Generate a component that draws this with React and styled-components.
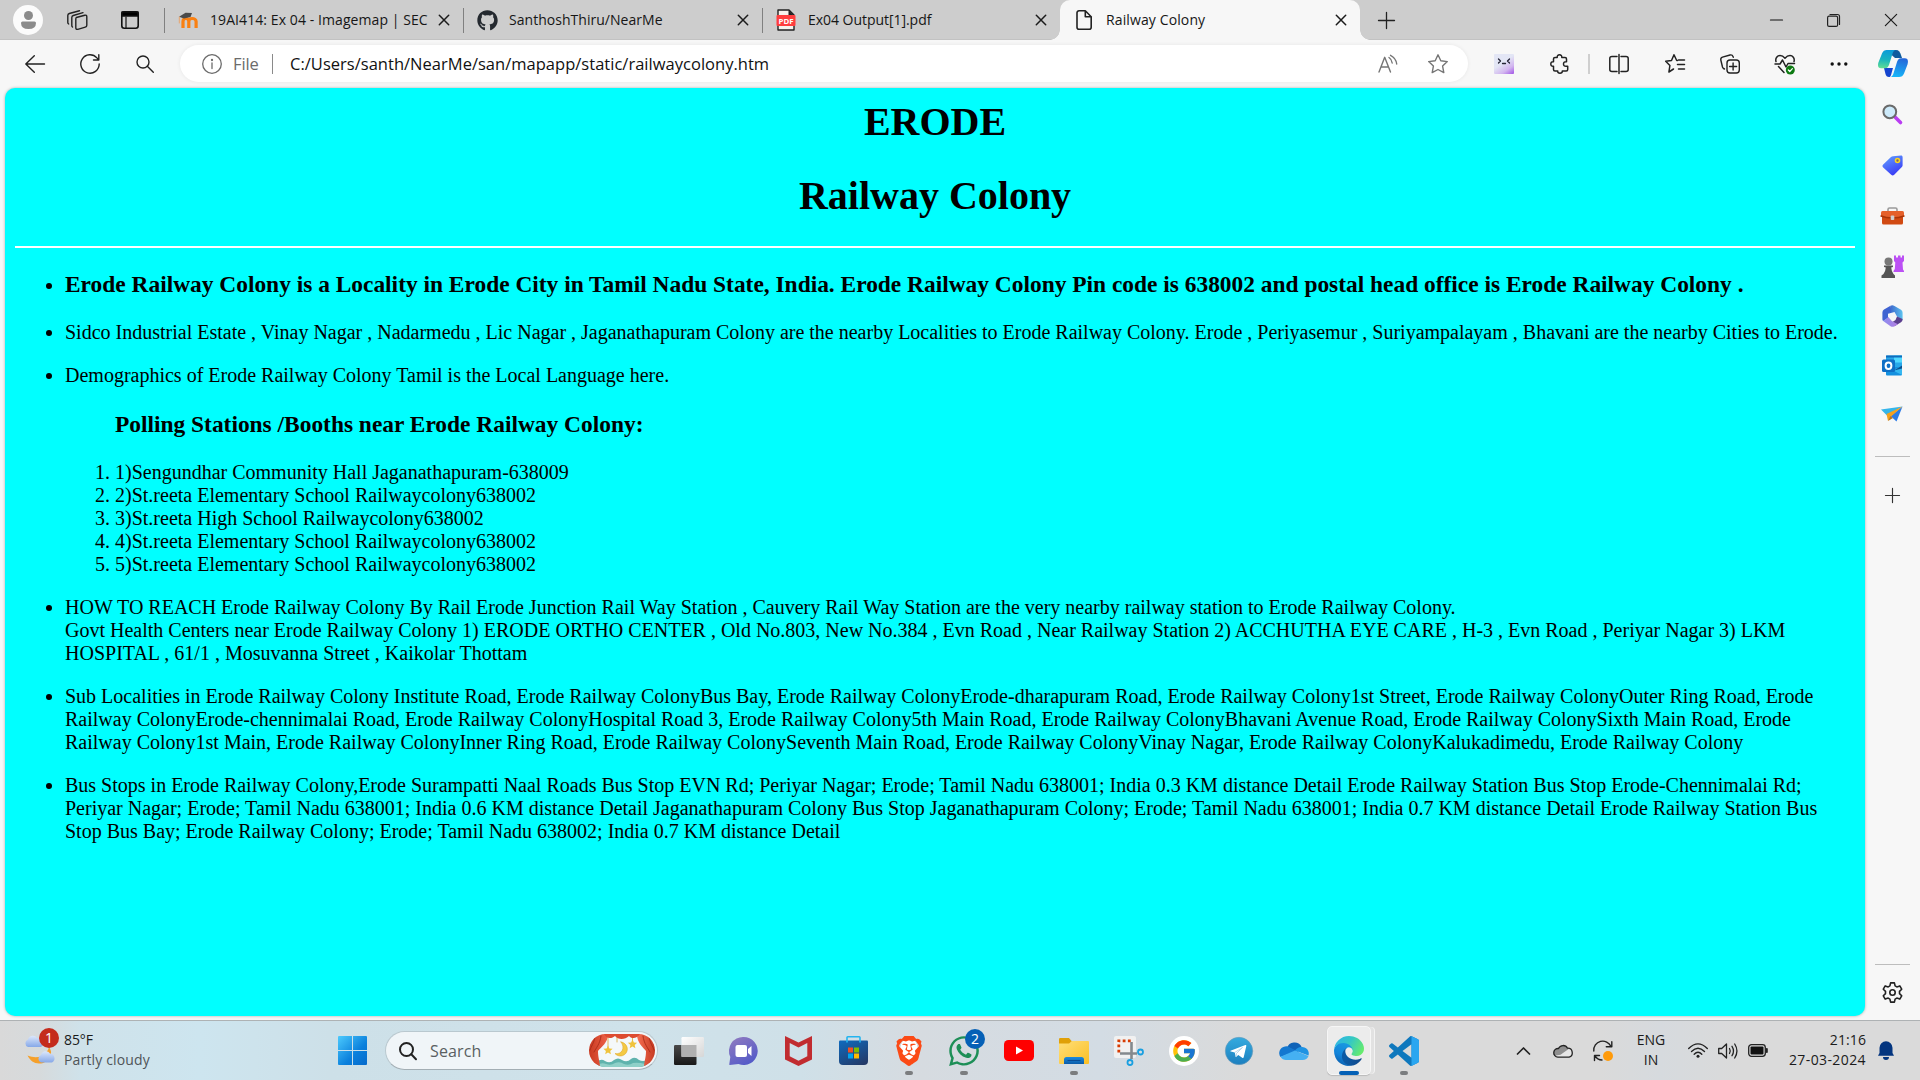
import React from "react";
import styled, { createGlobalStyle, css } from "styled-components";
import { FaGithub, FaWhatsapp } from "react-icons/fa";
import { SiBrave } from "react-icons/si";
import { FcGoogle } from "react-icons/fc";

const Global = createGlobalStyle`
  *, *::before, *::after { box-sizing: border-box; }
  html, body { margin: 0; padding: 0; }
  body { background: #f7f7f7; overflow: hidden; }
`;

const uiFont = css`
  font-family: "Segoe UI", "Open Sans", "Noto Sans", sans-serif;
`;

/* ---------- shared ---------- */

const Screen = styled.div`
  width: 1920px;
  height: 1080px;
  display: flex;
  flex-direction: column;
  background: #f7f7f7;
  color: #111;
  ${uiFont}
`;

const Icon = styled.svg`
  display: block;
  flex: none;
  width: ${(p) => p.$w || 20}px;
  height: ${(p) => p.$h || p.$w || 20}px;
  overflow: visible;
  fill: none;
  stroke: ${(p) => p.$c || "none"};
  stroke-width: ${(p) => p.$s || 1.4};
  stroke-linecap: round;
  stroke-linejoin: round;
`;

const Slot = styled.div`
  flex: none;
  width: ${(p) => p.$w}px;
  height: 100%;
  display: flex;
  align-items: center;
  justify-content: center;
`;

/* ---------- tab strip ---------- */

const TabStrip = styled.div`
  flex: none;
  height: 40px;
  display: flex;
  align-items: center;
  background: #cdcdcd;
  box-shadow: inset 0 -1px 0 #c2c2c2;
`;

const Avatar = styled.div`
  width: 30px;
  height: 30px;
  border-radius: 50%;
  background: #fbfbfb;
  display: flex;
  align-items: center;
  justify-content: center;
`;

const Tab = styled.div`
  position: relative;
  flex: none;
  width: ${(p) => p.$w}px;
  height: 40px;
  padding: 0 9px 0 13px;
  display: flex;
  align-items: center;
  background: ${(p) => (p.$active ? "#f7f7f7" : "transparent")};
  border-radius: ${(p) => (p.$active ? "10px 10px 0 0" : "0")};

  ${(p) =>
    p.$active
      ? css`
          &::before,
          &::after {
            content: "";
            position: absolute;
            bottom: 0;
            width: 10px;
            height: 10px;
          }
          &::before {
            left: -10px;
            background: radial-gradient(circle at 0 0, transparent 9.5px, #f7f7f7 10px);
          }
          &::after {
            right: -10px;
            background: radial-gradient(circle at 100% 0, transparent 9.5px, #f7f7f7 10px);
          }
        `
      : css`
          &::before {
            content: "";
            position: absolute;
            left: 0;
            top: 8px;
            width: 1px;
            height: 25px;
            background: #808080;
          }
        `}
`;

const TabIcon = styled.div`
  flex: none;
  width: 22px;
  display: flex;
  justify-content: center;
`;

const TabLabel = styled.div`
  flex: 1;
  padding-left: 11px;
  font-size: 14px;
  line-height: 20px;
  letter-spacing: ${(p) => p.$ls || 0}px;
  white-space: nowrap;
  color: #161616;
`;

const TabClose = styled.div`
  flex: none;
  width: 20px;
  display: flex;
  justify-content: center;
`;

const Spacer = styled.div`
  flex: 1;
`;

/* ---------- toolbar ---------- */

const Toolbar = styled.div`
  flex: none;
  height: 48px;
  padding: 0 0 1px 8px;
  display: flex;
  align-items: center;
`;

const AddressBar = styled.div`
  flex: none;
  width: 1288px;
  height: 37px;
  margin: 0 8px;
  border-radius: 19px;
  background: #fff;
  box-shadow: 0 0 4px rgba(0, 0, 0, 0.07);
  display: flex;
  align-items: center;
  padding-left: 22px;
`;

const Scheme = styled.span`
  padding-left: 11px;
  width: 50px;
  font-size: 16.5px;
  letter-spacing: -0.1px;
  color: #6b6b6b;
`;

const Rule = styled.span`
  flex: none;
  width: ${(p) => p.$w || 1}px;
  height: ${(p) => p.$h}px;
  background: ${(p) => p.$c};
`;

const Url = styled.span`
  flex: 1;
  padding-left: 17px;
  font-size: 16.5px;
  letter-spacing: 0.02px;
  white-space: nowrap;
  color: #111;
`;

/* ---------- page ---------- */

const Workspace = styled.div`
  flex: none;
  height: 932px;
  display: flex;
  padding-left: 5px;
`;

const Page = styled.main`
  flex: none;
  width: 1860px;
  height: 928px;
  padding: 10px;
  border-radius: 10px;
  background: #00ffff;
  box-shadow: 0 0 3px rgba(0, 0, 0, 0.3);
  color: #000;
  font-family: "Times New Roman", "Liberation Serif", serif;
  font-size: 20px;
  line-height: 23px;

  h1 {
    margin: 0 0 27px;
    font-size: 40px;
    line-height: 47px;
    text-align: center;
  }
  hr {
    margin: 0;
    border: 0;
    height: 2px;
    background: #fff;
  }
  h3 {
    margin: 23.4px 0;
    font-size: 23.41px;
    line-height: 26.6px;
  }
  p {
    margin: 20px 0;
  }
  ul,
  ol {
    margin: 0;
    padding-left: 50px;
  }
`;

/* ---------- sidebar ---------- */

const Sidebar = styled.aside`
  flex: 1;
  padding: 1px 1px 0 0;
  display: flex;
  flex-direction: column;
  align-items: center;
`;

const SideItem = styled.div`
  height: ${(p) => p.$h}px;
  flex: none;
  display: flex;
  align-items: center;
  justify-content: center;
`;

/* ---------- taskbar ---------- */

const Taskbar = styled.footer`
  flex: none;
  height: 60px;
  border-top: 1px solid #aeb2b4;
  display: flex;
  align-items: center;
  background: linear-gradient(
    90deg,
    #d9d9d9 0,
    #d6dadc 40px,
    #cfe2ea 80px,
    #cde5ef 200px,
    #cde0e8 330px,
    #cfe2ea 640px,
    #cfe0e8 800px,
    #d6dbe0 920px,
    #d3dce4 1100px,
    #dadada 1250px,
    #dadada 1600px,
    #d6dade 1660px,
    #dadada 1740px
  );
`;

const Weather = styled.div`
  flex: none;
  width: 338px;
  display: flex;
  align-items: center;
  padding-left: 24px;
`;

const WeatherText = styled.div`
  padding: 0 0 2px 9px;
  display: flex;
  flex-direction: column;
  font-size: 14px;
  line-height: 20px;
  white-space: nowrap;
  letter-spacing: -0.1px;
  color: #1a1a1a;

  span + span {
    color: #505558;
    letter-spacing: 0.16px;
  }
`;

const SearchBox = styled.div`
  flex: none;
  width: 273px;
  height: 39px;
  margin: 0 3px 0 18px;
  padding: 0 2px 0 13px;
  border-radius: 20px;
  border: 1px solid #b9c8cf;
  border-bottom-color: #a3aeb4;
  background: #f0f5f8;
  display: flex;
  align-items: center;
`;

const SearchText = styled.span`
  flex: 1;
  padding-left: 13px;
  font-size: 16px;
  letter-spacing: 0.15px;
  color: #5a5f62;
`;

const AppButton = styled.div`
  position: relative;
  flex: none;
  width: 55px;
  height: 59px;
  display: flex;
  align-items: center;
  justify-content: center;

  &::after {
    content: "";
    display: ${(p) => (p.$running || p.$current ? "block" : "none")};
    position: absolute;
    left: 50%;
    bottom: 5px;
    width: ${(p) => (p.$current ? 20 : 8)}px;
    height: 4px;
    transform: translateX(-50%);
    border-radius: 2px;
    background: ${(p) => (p.$current ? "#0560b6" : "#7b7d7f")};
  }
`;

const CurrentTile = styled.div`
  width: 44px;
  height: 49px;
  border-radius: 5px;
  border: 1px solid #f6f6f6;
  background: #ececec;
  box-shadow: 4px 0 0 -1px #e2e2e2, 5px 0 0 -1px #f3f3f3, 0 1px 1px rgba(0, 0, 0, 0.15);
  display: flex;
  align-items: center;
  justify-content: center;
`;

const Count = styled.span`
  position: absolute;
  left: ${(p) => p.$x}px;
  top: ${(p) => p.$y}px;
  width: 20px;
  height: 20px;
  border-radius: 50%;
  background: ${(p) => p.$bg};
  color: #fff;
  font-size: 14px;
  line-height: 20px;
  text-align: center;
`;

const WeatherIcon = styled.div`
  position: relative;
`;

const BraveIcon = styled.div`
  display: flex;
  background: radial-gradient(ellipse 9px 12px at 50% 46%, #fff 95%, transparent 100%);
  color: #fb4a16;
`;

const GoogleDisc = styled.div`
  width: 30px;
  height: 30px;
  border-radius: 50%;
  background: #fff;
  display: flex;
  align-items: center;
  justify-content: center;
`;

const Stack = styled.div`
  flex: none;
  width: ${(p) => p.$w}px;
  padding-bottom: 1px;
  display: flex;
  flex-direction: column;
  text-align: ${(p) => p.$align};
  font-size: 14px;
  line-height: 20px;
  white-space: nowrap;
  color: #1b1b1b;
`;

const StackLine = styled.span`
  letter-spacing: ${(p) => p.$ls || 0}px;
`;

/* ---------- icons ---------- */

const Cross = ({ w = 10, s = 1.5 }) => (
  <Icon $w={w} $c="#1b1b1b" $s={s} viewBox="0 0 10 10"><path d="M.3.3l9.4 9.4M9.7.3L.3 9.7" /></Icon>
);

const Plus = ({ w = 17, c = "#222" }) => (
  <Icon $w={w} $c={c} $s={1.3} viewBox="0 0 17 17"><path d="M8.5.5v16M.5 8.5h16" /></Icon>
);

const Moodle = () => (
  <Icon $w={20} $h={16} viewBox="0 0 20 16">
    <path d="M5 16V9.500c0-2 1.200-3 2.900-3s2.900 1 2.900 3V16M10.800 9.500c0-2 1.500-3 3.400-3s3.900 1 3.900 3V16" stroke="#f98012" strokeWidth="3.200" strokeLinecap="butt" />
    <path d="M1 4.800L7.500.8 14 1.100 12.500 5 6 6.500z" fill="#4a4a4a" />
    <path d="M1.300 5v6" stroke="#e9a46c" strokeWidth="1" />
  </Icon>
);

const Pdf = () => (
  <Icon $w={20} $h={22} viewBox="0 0 20 22">
    <path d="M2 1h11l5 5v15H2z" fill="#f7f3ee" stroke="#222" strokeWidth="1.400" />
    <path d="M12.500 1l5.500 5.500h-5.500z" fill="#222" />
    <rect x="0.500" y="6" width="19" height="11" rx="1" fill="#ff3e3e" />
    <text x="10" y="14.600" textAnchor="middle" fontSize="7.800" fontWeight="700" fontFamily="Open Sans, sans-serif" fill="#fff">PDF</text>
  </Icon>
);

const Copilot = () => (
  <Icon $w={30} $h={27} viewBox="0 0 30 27">
    <defs>
      <linearGradient id="cpA" x1="0.300" y1="0" x2="0.200" y2="1">
        <stop offset="0" stopColor="#0a9bd8" /><stop offset="0.500" stopColor="#17b3c0" /><stop offset="1" stopColor="#62de92" />
      </linearGradient>
      <linearGradient id="cpB" x1="0.700" y1="0" x2="0.500" y2="1">
        <stop offset="0" stopColor="#2465d8" /><stop offset="1" stopColor="#17b4f8" />
      </linearGradient>
    </defs>
    <path d="M8 0h10c3 0 4 2 5 5l1 3h-7z" fill="#0f5b9e" />
    <path d="M6 18h9l-2 7c-.5 1.500-1 2-2 2-2 0-3-1-3.500-3z" fill="#1444cf" />
    <path d="M9 0h9c-2 0-3 2-3.600 4l-3.400 11c-.8 2-2 3.300-4 3.300H3c-3 0-3.500-3-2.500-6L4 3.500C5 1 6.500 0 9 0z" fill="url(#cpA)" />
    <path d="M21 27h-9c2 0 3-2 3.600-4L19 12c.8-2 2-3.700 4-3.700h4c3 0 3.500 3 2.500 6.200L26 23.500c-1 2.500-2.500 3.500-5 3.500z" fill="url(#cpB)" />
  </Icon>
);

const Edge = () => (
  <Icon $w={30} viewBox="0 0 256 256">
    <defs>
      <linearGradient id="egA" x1="0.200" x2="1" y1="0.600" y2="0.600"><stop offset="0" stopColor="#0c59a4" /><stop offset="1" stopColor="#114a8b" /></linearGradient>
      <linearGradient id="egB" x1="0.700" x2="0.300" y1="0" y2="1"><stop offset="0" stopColor="#1b9de2" /><stop offset="0.600" stopColor="#1383d9" /><stop offset="1" stopColor="#0a5cab" /></linearGradient>
      <linearGradient id="egC" x1="0" x2="1" y1="0.200" y2="0.600"><stop offset="0" stopColor="#2fb4e8" /><stop offset="0.500" stopColor="#35c8c4" /><stop offset="1" stopColor="#66eb6e" /></linearGradient>
    </defs>
    <path fill="url(#egA)" d="M231 190.500c-3.400 1.800-6.900 3.400-10.500 4.700a101.500 101.500 0 0 1-35.900 6.400c-47.300 0-88.500-32.500-88.500-74.300a31.500 31.500 0 0 1 16.400-27.300c-42.800 1.800-53.800 46.400-53.800 72.500 0 74 68.100 81.400 82.800 81.400 7.900 0 19.800-2.300 27-4.600l1.300-.4a128.300 128.300 0 0 0 66.600-52.800 4 4 0 0 0-5.400-5.600z" />
    <path fill="url(#egB)" d="M105.700 241.400a79.200 79.200 0 0 1-22.700-21.300 80.700 80.700 0 0 1 29.500-120c3.200-1.500 8.500-4.100 15.600-4a32.400 32.400 0 0 1 25.700 13 31.900 31.900 0 0 1 6.300 18.700c0-.2 24.500-79.600-80-79.600-43.900 0-80 41.600-80 78.200a130.200 130.200 0 0 0 12.100 56 128 128 0 0 0 156.400 67 75.500 75.500 0 0 1-62.800-8z" />
    <path fill="url(#egC)" d="M152.300 148.900c-.9 1-3.400 2.500-3.400 5.600 0 2.600 1.700 5.200 4.800 7.300 14.300 10 41.400 8.600 41.500 8.600a59.600 59.600 0 0 0 30.300-8.300 61.400 61.400 0 0 0 30.400-52.900c.3-22.400-8-37.300-11.300-43.900C223.500 23.900 177.700 0 128 0A128 128 0 0 0 0 126.200c.5-36.500 36.800-66 80-66 3.500 0 23.500.3 42 10.100 16.300 8.600 24.900 19 30.800 29.200 6.200 10.700 7.300 24.100 7.300 29.500 0 5.300-2.700 13.300-7.800 19.900z" />
  </Icon>
);

const Curtain = () => (
  <Icon $w={66} $h={33} viewBox="0 0 66 33">
    <defs>
      <clipPath id="pill"><rect width="66" height="33" rx="16.500" /></clipPath>
      <linearGradient id="drape" x1="0" x2="1"><stop offset="0" stopColor="#c93a22" /><stop offset="0.300" stopColor="#f0654a" /><stop offset="0.500" stopColor="#cf3f26" /><stop offset="0.750" stopColor="#f26a4e" /><stop offset="1" stopColor="#c63a22" /></linearGradient>
    </defs>
    <g clipPath="url(#pill)">
      <rect width="66" height="33" fill="#f4f8fa" />
      <path d="M8 28q4-4 8-1 5 3 9-1 4-3 8 0 5 3 9-1 4-3 8 1 4 2 8 0v8H8z" fill="#5fb3ad" />
      <path d="M8 31q5-3 9-1 5 2 9-1 5-2 9 1 5 2 9-1 5-1 12 1v4H8z" fill="#8fd0c8" />
      <path d="M19 0v13M28 0v8M43.500 0v7" stroke="#d8a637" strokeWidth="0.800" />
      <path d="M19 11.500l1.400 3 3.200.3-2.400 2.200.7 3.200-2.900-1.700-2.800 1.700.7-3.200-2.500-2.200 3.200-.3zM43.500 5.500l1.400 3 3.200.3-2.400 2.200.7 3.200-2.900-1.700-2.800 1.700.7-3.200-2.500-2.200 3.200-.3z" fill="#f0c33c" />
      <path d="M32 8a7 7 0 1 1-6 11.500c7 1.500 10.500-6 6-11.500z" fill="#f4c943" stroke="#e0a92c" strokeWidth="0.600" />
      <path d="M0 0h19c0 9-7 13-10 17 0 7 2 11 2 16H0zM66 0H48c0 9 6 13 9 17 0 7-2 11-2 16h11z" fill="url(#drape)" />
      <path d="M15 0h36c-3 5-9 5-11 2-4 4-11 4-14 0-3 3-9 3-11-2z" fill="#dd4b30" />
      <path d="M6 2c-1 8-4 10-5 14M12 2c-1 8-5 12-7 16M60 2c1 8 4 10 5 14M54 2c1 8 5 12 7 16" stroke="#a92c18" strokeWidth="0.900" />
    </g>
  </Icon>
);

/* ---------- data ---------- */

const tabs = [
  { title: "19AI414: Ex 04 - Imagemap | SEC", icon: <Moodle />, w: 299, ls: 0.08 },
  { title: "SanthoshThiru/NearMe", icon: <FaGithub size={21} color="#24292f" />, w: 299, ls: 0.03 },
  { title: "Ex04 Output[1].pdf", icon: <Pdf />, w: 298, ls: -0.04 },
  {
    title: "Railway Colony",
    icon: (
      <Icon $w={16} $h={20} $c="#222" $s={1.6} viewBox="0 0 16 20">
        <path d="M3 .8h6.300L15.200 6.800v10.400a2 2 0 0 1-2 2H3a2 2 0 0 1-2-2V2.800a2 2 0 0 1 2-2zM9.300.8v6h6" />
      </Icon>
    ),
    w: 300,
    ls: 0.12,
    active: true,
  },
];

const booths = [
  "1)Sengundhar Community Hall Jaganathapuram-638009",
  "2)St.reeta Elementary School Railwaycolony638002",
  "3)St.reeta High School Railwaycolony638002",
  "4)St.reeta Elementary School Railwaycolony638002",
  "5)St.reeta Elementary School Railwaycolony638002",
];

const sideIcons = [
  <Icon $w={20} viewBox="0 0 20 20">
    <path d="M13 13l5.500 5.500" stroke="#b93df2" strokeWidth="3.600" />
    <circle cx="7.800" cy="7.800" r="6.400" fill="#cdeafa" stroke="#6a6a6a" strokeWidth="2" />
  </Icon>,
  <Icon $w={21} viewBox="0 0 21 21">
    <defs><linearGradient id="tag" x1="0" x2="0.500" y2="1"><stop offset="0" stopColor="#63a4ff" /><stop offset="1" stopColor="#3a3df5" /></linearGradient></defs>
    <path d="M11 1.200L19 .6c1 0 1.600.600 1.600 1.600V10c0 1-.3 1.600-1 2.300l-7.400 7.400c-1 1-2 1-3 0L1.200 12.500c-1-1-1-2 0-3L9 2c.6-.6 1.200-.8 2-.8z" fill="url(#tag)" />
    <circle cx="15.500" cy="5.500" r="2" fill="#7a6a6a" stroke="#fbd320" strokeWidth="1.600" />
  </Icon>,
  <Icon $w={23} $h={18} viewBox="0 0 23 18">
    <path d="M7 5V2.500Q7 1 8.500 1h6Q16 1 16 2.500V5" stroke="#9a9a9a" strokeWidth="1.600" />
    <rect x="1" y="8" width="21" height="9.500" rx="1.500" fill="#d14a12" />
    <path d="M0 5.500Q0 4 1.500 4h20Q23 4 23 5.500V9q-5 2-11.500 2T0 9z" fill="#e5602a" />
    <path d="M0 9q5 2 11.500 2T23 9" stroke="#a93508" />
    <rect x="9.700" y="8.500" width="3.600" height="4.500" rx="1" fill="#cfcfcf" />
  </Icon>,
  <Icon $w={23} viewBox="0 0 23 23">
    <path d="M13 .5h2v2h2v-2h2.500v2h1.500v-2h2V6l-1.500 1.500.5 7 1 1.500V17H12.500v-1l1.300-2 .5-6.500L13 6z" fill="#bb50f4" />
    <circle cx="7.500" cy="6.500" r="4" fill="#777" />
    <path d="M3 10.500h9v1.500l-1.800.5q.3 4 2.300 6.500l1.500 1.500V23H.5v-2.500L2.500 19Q4.500 16.500 4.800 12.500L3 12z" fill="#555" />
  </Icon>,
  <Icon $w={21} $h={22} viewBox="0 0 21 22">
    <defs>
      <linearGradient id="m1" x1="0" x2="1"><stop offset="0" stopColor="#3a5fc8" /><stop offset="1" stopColor="#5cc3f0" /></linearGradient>
      <linearGradient id="m2" x1="0" x2="1"><stop offset="0" stopColor="#8e8df0" /><stop offset="1" stopColor="#b07de0" /></linearGradient>
    </defs>
    <path d="M8.500.8q2-1 4 .2l6.500 3.800q1.600 1 1.600 3V15L15 11.500 12.500 7 7 8.500z" fill="url(#m1)" />
    <path d="M8.500.8L2 4.500Q.4 5.500.4 7.500v6.800q0 1 .8 1.700L6 13V9l2.500-2z" fill="#3f63d2" />
    <path d="M20.600 14v.5q0 1.700-1.600 2.700l-6.500 4L9 18l4.500-3L15 11.500z" fill="#5b3f8f" />
    <path d="M6.300 12L1.200 16l7.300 5.200q2 1.200 4 0l3.500-2-6.200-3.300z" fill="url(#m2)" />
  </Icon>,
  <Icon $w={21} viewBox="0 0 21 21">
    <rect x="4" y="0.500" width="16" height="14" rx="1" fill="#28a8ea" />
    <rect x="12" y="0.500" width="8" height="7" fill="#50d9ff" />
    <rect x="4" y="0.500" width="16" height="2" fill="#0f6cbd" />
    <path d="M4 12l16 0v7.500q0 1-1 1H5q-1 0-1-1z" fill="#1490df" />
    <path d="M20 10.500v9.500l-9-4.500z" fill="#35b8f1" />
    <path d="M12 15.500l8-5v3z" fill="#0a4f8f" />
    <rect x="0" y="4.500" width="13" height="12.500" rx="1.500" fill="#0f6fc6" />
    <ellipse cx="6.500" cy="10.800" rx="2.900" ry="3.200" stroke="#fff" strokeWidth="2" />
  </Icon>,
  <Icon $w={22} $h={17} viewBox="0 0 22 17">
    <path d="M0 3.500L21.500.5 6 9.500z" fill="#35b5ea" />
    <path d="M21.500.5L15.500 15.500 9.500 10z" fill="#2a7be6" />
    <path d="M21.500.5L5.500 8 7 15l3-4.500z" fill="#f5a11c" />
    <path d="M7 15l2.500-5 2.500 2z" fill="#b9731a" />
  </Icon>,
];

const taskApps = [
  {
    icon: (
      <Icon $w={30} $h={28} viewBox="0 0 30 28">
        <defs><linearGradient id="tvd" x1="0" x2="0" y2="1"><stop offset="0" stopColor="#494949" /><stop offset="1" stopColor="#191919" /></linearGradient>
          <linearGradient id="tvl" x2="1" y2="1"><stop offset="0" stopColor="#fff" /><stop offset="1" stopColor="#d6d6d6" /></linearGradient></defs>
        <rect x="0" y="8" width="22.500" height="20" rx="1.200" fill="url(#tvd)" />
        <rect x="7.500" y="0" width="22.500" height="20" rx="1.200" fill="url(#tvl)" />
        <rect x="7.500" y="8" width="15" height="12" fill="#b0b0b0" />
      </Icon>
    ),
  },
  {
    icon: (
      <Icon $w={29} $h={28} viewBox="0 0 29 28">
        <defs><linearGradient id="ch" x1="0.200" y1="0" x2="0.800" y2="1"><stop offset="0" stopColor="#8d79c0" /><stop offset="1" stopColor="#5059c9" /></linearGradient></defs>
        <path d="M14.500 0a14 14 0 1 1-5 27L.8 28q-.8 0-.5-.9L1.300 20A14 14 0 0 1 14.500 0z" fill="url(#ch)" />
        <rect x="6.500" y="8" width="11.500" height="12" rx="2" fill="#fff" />
        <path d="M19 12l3.500-3v10L19 16z" fill="#fff" />
      </Icon>
    ),
  },
  {
    icon: (
      <Icon $w={27} $h={30} viewBox="0 0 27 30">
        <path d="M0 0l13.500 6.500L27 0v23.500L13.500 30 0 23.500zM4.700 7v13.200l8.800 4.500 8.800-4.500V7l-8.800 4.600z" fill="#c12c30" fillRule="evenodd" />
      </Icon>
    ),
  },
  {
    icon: (
      <Icon $w={29} $h={29} viewBox="0 0 29 29">
        <defs><linearGradient id="st" x1="0.200" x2="0.800" y2="1"><stop offset="0" stopColor="#1067b8" /><stop offset="1" stopColor="#243a68" /></linearGradient></defs>
        <path d="M0 5.500q0-1 1-1h27q1 0 1 1V25q0 4-4 4H4q-4 0-4-4z" fill="url(#st)" />
        <path d="M8 6V1.500Q8 .8 8.800.8h11.400q.8 0 .8.700V6" stroke="#23b4ef" strokeWidth="1.600" />
        <path d="M9 11.500h5v5H9z" fill="#f25022" /><path d="M15 11.500h5v5h-5z" fill="#7fba00" />
        <path d="M9 17.500h5v5H9z" fill="#00a4ef" /><path d="M15 17.500h5v5h-5z" fill="#ffb900" />
      </Icon>
    ),
  },
  { icon: <BraveIcon><SiBrave size={30} /></BraveIcon>, running: true },
  { icon: <><FaWhatsapp size={34} color="#1d8f57" /><Count $x={29} $y={8} $bg="#0560b6">2</Count></>, running: true },
  {
    icon: (
      <Icon $w={30} $h={21} viewBox="0 0 30 21">
        <rect width="30" height="21" rx="4.500" fill="#f00" /><path d="M12 6.500l7 4-7 4z" fill="#fff" />
      </Icon>
    ),
  },
  {
    icon: (
      <Icon $w={30} $h={26} viewBox="0 0 30 26">
        <defs><linearGradient id="fo" x2="1" y2="1"><stop offset="0" stopColor="#ffdf7a" /><stop offset="1" stopColor="#fbbf24" /></linearGradient>
          <linearGradient id="fb" x1="0" x2="0" y2="1"><stop offset="0" stopColor="#1b8be0" /><stop offset="1" stopColor="#0b5ba8" /></linearGradient></defs>
        <path d="M0 1.200Q0 0 1.200 0H10l3 3.500V6H0z" fill="#e0a008" />
        <path d="M0 5.500h10L13 3h16q1 0 1 1v21q0 1-1 1H1q-1 0-1-1z" fill="url(#fo)" />
        <path d="M5 26v-4.500Q5 19 7.500 19h15q2.500 0 2.500 2.500V26z" fill="url(#fb)" />
        <path d="M9 22.500h12" stroke="#0a4c94" strokeWidth="1.200" />
      </Icon>
    ),
    running: true,
  },
  {
    icon: (
      <Icon $w={30} viewBox="0 0 30 30">
        <rect width="22" height="22" rx="2" fill="#f1f1f1" />
        <path d="M4.800 16.500V4.800H17" stroke="#d83b01" strokeWidth="2.800" strokeDasharray="2.800 2.400" strokeLinecap="butt" strokeLinejoin="miter" />
        <path d="M6 17.500h17M17.500 6v17" stroke="#84898d" strokeWidth="2.600" strokeLinecap="butt" />
        <circle cx="26.500" cy="16" r="2.500" stroke="#1a9fe0" strokeWidth="1.800" />
        <circle cx="16" cy="26.500" r="2.500" stroke="#1a9fe0" strokeWidth="1.800" />
      </Icon>
    ),
  },
  { icon: <GoogleDisc><FcGoogle size={26} /></GoogleDisc> },
  {
    icon: (
      <Icon $w={28} viewBox="0 0 28 28">
        <defs><linearGradient id="tg" x1="0" x2="0" y2="1"><stop offset="0" stopColor="#35abdf" /><stop offset="1" stopColor="#1c7fbf" /></linearGradient></defs>
        <circle cx="14" cy="14" r="13.700" fill="url(#tg)" stroke="#6c9bb8" strokeWidth="0.600" />
        <path d="M5.500 13.700L20.300 8q1.200-.3 1 1L18.700 20.300q-.4 1.200-1.500.5l-3.900-2.900-2 1.900q-.6.500-.7-.4l-.8-4L5.900 14.500q-1-.4-.4-.8z" fill="#fff" />
        <path d="M10 15.300l7.500-4.800-6 6-.4 3" stroke="#a8cfe6" strokeWidth="0.800" />
      </Icon>
    ),
  },
  {
    icon: (
      <Icon $w={30} $h={19} viewBox="0 0 30 19">
        <path d="M8 7a8 8 0 0 1 14.500-1.500L19 11 8 8z" fill="#0f63b8" />
        <path d="M9 5.500a6.800 6.800 0 0 0-3 0A6.600 6.600 0 0 0 1.500 16L18 10z" fill="#1478d0" />
        <path d="M22.300 6a6.600 6.600 0 0 1 7.200 8.500L16 9.500q2.500-3.600 6.300-3.500z" fill="#1f93e3" />
        <path d="M1.500 15.700L16 9.500l13.500 5.500q-1.500 4-6 4H7q-3.500 0-5.500-3.300z" fill="#45b0f2" />
      </Icon>
    ),
  },
  { icon: <CurrentTile><Edge /></CurrentTile>, current: true },
  {
    icon: (
      <Icon $w={30} viewBox="0 0 24 24">
        <path fill="#0f78bd" d="M23.150 2.587L18.210.21a1.494 1.494 0 0 0-1.705.29l-9.460 8.630-4.120-3.128a.999.999 0 0 0-1.276.057L.327 7.261A1 1 0 0 0 .326 8.740L3.899 12 .326 15.260a1 1 0 0 0 .001 1.479L1.650 17.940a.999.999 0 0 0 1.276.057l4.120-3.128 9.460 8.630a1.492 1.492 0 0 0 1.704.29l4.942-2.377A1.500 1.500 0 0 0 24 20.060V3.939a1.500 1.500 0 0 0-.85-1.352zm-5.146 14.861L10.826 12l7.178-5.448v10.896z" />
        <path fill="#2aa6f0" d="M18 .1l5.150 2.487A1.500 1.500 0 0 1 24 3.940v16.120a1.500 1.500 0 0 1-.85 1.352L18 23.900z" />
      </Icon>
    ),
    running: true,
  },
];

/* ---------- app ---------- */

export default function App() {
  return (
    <Screen>
      <Global />
      <TabStrip>
        <Slot $w={56}>
          <Avatar>
            <Icon $w={15} $h={18} viewBox="0 0 15 18">
              <circle cx="7.500" cy="4.500" r="4.500" fill="#8b8b8b" />
              <path d="M1.500 10.500h12q1.500 0 1.500 1.500 0 6-7.500 6T0 12q0-1.500 1.500-1.500z" fill="#8b8b8b" />
            </Icon>
          </Avatar>
        </Slot>
        <Slot $w={43}>
          <Icon $w={21} $h={20} $c="#222" viewBox="0 0 21 20">
            <path d="M9.300 7.500l8.500-2.300q2-.5 2 1.500v8.500q0 1.500-1.500 1.900l-7.500 2.200q-2 .5-2-1.500V9q0-1.200.5-1.500zM5.500 17Q4.800 16.500 4.800 15.500V7.500Q4.800 6 6.300 5.500L16 2.700M1.700 14Q.8 13.500.8 12.500V5.500Q.8 4 2.300 3.500L12.500.8" />
          </Icon>
        </Slot>
        <Slot $w={62}>
          <Icon $w={18} $c="#111" $s={1.600} viewBox="0 0 18 18">
            <rect x="0.800" y="0.800" width="16.400" height="16.400" rx="2.500" />
            <path d="M1 1h16v4H1z" fill="#000" /><path d="M5 6v11" strokeWidth="1.200" />
          </Icon>
        </Slot>
        <Slot $w={3} />
        {tabs.map((t) => (
          <Tab key={t.title} $w={t.w} $active={t.active}>
            <TabIcon>{t.icon}</TabIcon>
            <TabLabel $ls={t.ls}>{t.title}</TabLabel>
            <TabClose><Cross /></TabClose>
          </Tab>
        ))}
        <Slot $w={53}><Plus /></Slot>
        <Spacer />
        <Slot $w={57}><Icon $w={13} $h={2} $c="#111" $s={1.200} viewBox="0 0 13 2"><path d="M.5 1h12" /></Icon></Slot>
        <Slot $w={57}>
          <Icon $w={13} $h={13} $c="#222" $s={1.200} viewBox="0 0 13 13">
            <rect x="0.600" y="2.200" width="10" height="10.200" rx="1.500" /><path d="M3 .5h7.500q2 0 2 2v8" />
          </Icon>
        </Slot>
        <Slot $w={58}><Cross w={12} s={1} /></Slot>
      </TabStrip>

      <Toolbar>
        <Slot $w={54}><Icon $w={20} $h={18} $c="#222" viewBox="0 0 20 18"><path d="M19.500 9H.8M9.300.7L.8 9l8.500 8.300" /></Icon></Slot>
        <Slot $w={55}><Icon $w={20} $c="#222" viewBox="0 0 20 20"><path d="M19.200 10a9.200 9.200 0 1 1-2.300-6.100L18.800 6M18.800.8V6h-5.300" /></Icon></Slot>
        <Slot $w={55}><Icon $w={18} $c="#222" viewBox="0 0 18 18"><circle cx="7" cy="7" r="6" /><path d="M11.300 11.300l6 6" /></Icon></Slot>
        <AddressBar>
          <Icon $w={20} $c="#6b6b6b" $s={1.300} viewBox="0 0 20 20">
            <circle cx="10" cy="10" r="9.300" /><path d="M10 9v5.500" /><circle cx="10" cy="6" r="0.500" fill="#6b6b6b" />
          </Icon>
          <Scheme>File</Scheme>
          <Rule $h={20} $c="#8a8a8a" />
          <Url>C:/Users/santh/NearMe/san/mapapp/static/railwaycolony.htm</Url>
          <Slot $w={50}>
            <Icon $w={20} $h={18} $c="#757575" viewBox="0 0 20 18">
              <path d="M1 17L6.700 2.300 12.500 17M3 12h7.500M11 2.500q2.800 1.800 3.200 5.500M12.500.3Q18 3 18.700 9" />
            </Icon>
          </Slot>
          <Slot $w={50}>
            <Icon $w={20} $c="#757575" viewBox="0 0 20 20">
              <path d="M10 .8l2.800 5.900 6.500.9-4.700 4.500 1.200 6.500L10 15.500l-5.800 3.100 1.200-6.500L.7 7.600l6.500-.9z" />
            </Icon>
          </Slot>
          <Slot $w={5} />
        </AddressBar>
        <Slot $w={56}>
          <Icon $w={20} viewBox="0 0 20 20">
            <defs><linearGradient id="xt" x1="0.300" x2="1" y2="1"><stop offset="0.350" stopColor="#e3e6f5" /><stop offset="0.700" stopColor="#d2b5ef" /><stop offset="1" stopColor="#a052e6" /></linearGradient></defs>
            <rect width="20" height="20" rx="1" fill="url(#xt)" />
            <path d="M4.500 5l2 2-2 2M15.500 5l-2 2 2 2M8.500 9.500h3" stroke="#252536" strokeWidth="1.300" />
          </Icon>
        </Slot>
        <Slot $w={55}>
          <Icon $w={19} $h={20} $c="#222" $s={1.500} viewBox="0 0 19 20">
            <path d="M5 3.500h2.200C7 1.500 8 .8 9.500.8s2.500.7 2.300 2.700H15q1.500 0 1.500 1.500v2.700c-2.300-.2-3 .8-3 2.300s.7 2.500 3 2.300h1.200V15.500q0 1.500-1.500 1.500h-3.900c.2 1.500-.8 2.200-2.300 2.200s-2.500-.7-2.300-2.200H5q-1.500 0-1.500-1.500v-3.200C1.500 12.500.8 11.500.8 10s.7-2.500 2.700-2.300V5q0-1.500 1.500-1.500z" />
          </Icon>
        </Slot>
        <Slot $w={1} />
        <Rule $w={2} $h={20} $c="#cfcfcf" />
        <Slot $w={57}>
          <Icon $w={20} $c="#222" $s={1.500} viewBox="0 0 20 20">
            <path d="M8 2.500H3q-2.200 0-2.200 2v11q0 2 2.200 2h5M12 2.500h5q2.200 0 2.200 2v11q0 2-2.200 2h-5M10 .5v19" />
          </Icon>
        </Slot>
        <Slot $w={55}>
          <Icon $w={20} $c="#222" $s={1.500} viewBox="0 0 20 20">
            <path d="M12.500 6.500h-.8L9 .8 6.500 6.500l-5.800.8 4.200 4.200-1 6.500 4.600-3M13.500 6h6M12.500 10.500h7M13.500 15h6" />
          </Icon>
        </Slot>
        <Slot $w={55}>
          <Icon $w={20} $c="#222" $s={1.400} viewBox="0 0 20 20">
            <rect x="7" y="6" width="12.300" height="13" rx="3" /><path d="M13.100 9v7M9.600 12.500h7M4.500 15L3.500 14.500Q2.800 14 2.500 13L.8 6Q.5 3.800 2.500 3.200L10 1q2.300-.5 3 1.500l.3.800" />
          </Icon>
        </Slot>
        <Slot $w={55}>
          <Icon $w={20} $c="#222" $s={1.500} viewBox="0 0 20 20">
            <path d="M1 7.500C0 4 2.500 1.500 5 1.500S9 3 10 4.200c1-1.200 2.500-2.700 5-2.700s5 2.500 4 6M0 10h5l2.500-4 3.500 7 2-3.500h6.500M3.500 12.500l5.500 6" />
            <circle cx="15.300" cy="16" r="4.500" fill="#0d7a12" stroke="none" /><path d="M13.300 16l1.500 1.500 2.600-2.800" stroke="#fff" strokeWidth="1.200" />
          </Icon>
        </Slot>
        <Slot $w={54}>
          <Icon $w={18} $h={4} viewBox="0 0 18 4"><circle cx="2.200" cy="2" r="1.700" fill="#111" /><circle cx="9" cy="2" r="1.700" fill="#111" /><circle cx="15.800" cy="2" r="1.700" fill="#111" /></Icon>
        </Slot>
        <Slot $w={53}><Copilot /></Slot>
      </Toolbar>

      <Workspace>
        <Page>
          <h1>ERODE</h1>
          <h1>Railway Colony</h1>
          <hr />
          <ul>
            <li><h3>Erode Railway Colony is a Locality in Erode City in Tamil Nadu State, India. Erode Railway Colony Pin code is 638002 and postal head office is Erode Railway Colony .</h3></li>
            <li><p>Sidco Industrial Estate , Vinay Nagar , Nadarmedu , Lic Nagar , Jaganathapuram Colony are the nearby Localities to Erode Railway Colony. Erode , Periyasemur , Suriyampalayam , Bhavani are the nearby Cities to Erode.</p></li>
            <li>
              <p>Demographics of Erode Railway Colony Tamil is the Local Language here.</p>
              <ol>
                <h3>Polling Stations /Booths near Erode Railway Colony:</h3>
                {booths.map((b) => <li key={b}>{b}</li>)}
              </ol>
            </li>
            <li><p>HOW TO REACH Erode Railway Colony By Rail Erode Junction Rail Way Station , Cauvery Rail Way Station are the very nearby railway station to Erode Railway Colony.<br />Govt Health Centers near Erode Railway Colony 1) ERODE ORTHO CENTER , Old No.803, New No.384 , Evn Road , Near Railway Station 2) ACCHUTHA EYE CARE , H-3 , Evn Road , Periyar Nagar 3) LKM HOSPITAL , 61/1 , Mosuvanna Street , Kaikolar Thottam</p></li>
            <li><p>Sub Localities in Erode Railway Colony Institute Road, Erode Railway ColonyBus Bay, Erode Railway ColonyErode-dharapuram Road, Erode Railway Colony1st Street, Erode Railway ColonyOuter Ring Road, Erode Railway ColonyErode-chennimalai Road, Erode Railway ColonyHospital Road 3, Erode Railway Colony5th Main Road, Erode Railway ColonyBhavani Avenue Road, Erode Railway ColonySixth Main Road, Erode Railway Colony1st Main, Erode Railway ColonyInner Ring Road, Erode Railway ColonySeventh Main Road, Erode Railway ColonyVinay Nagar, Erode Railway ColonyKalukadimedu, Erode Railway Colony</p></li>
            <li><p>Bus Stops in Erode Railway Colony,Erode Surampatti Naal Roads Bus Stop EVN Rd; Periyar Nagar; Erode; Tamil Nadu 638001; India 0.3 KM distance Detail Erode Railway Station Bus Stop Erode-Chennimalai Rd; Periyar Nagar; Erode; Tamil Nadu 638001; India 0.6 KM distance Detail Jaganathapuram Colony Bus Stop Jaganathapuram Colony; Erode; Tamil Nadu 638001; India 0.7 KM distance Detail Erode Railway Station Bus Stop Bus Bay; Erode Railway Colony; Erode; Tamil Nadu 638002; India 0.7 KM distance Detail</p></li>
          </ul>
        </Page>
        <Sidebar>
          {sideIcons.map((ic, i) => <SideItem key={i} $h={i < 3 ? 50.8 : 49.6}>{ic}</SideItem>)}
          <SideItem $h={33}><Rule $w={35} $h={1} $c="#bdbdbd" /></SideItem>
          <SideItem $h={46}><Plus w={15} c="#333" /></SideItem>
          <Spacer />
          <Rule $w={35} $h={1} $c="#bdbdbd" />
          <SideItem $h={55}>
            <Icon $w={21} $c="#222" $s={1.600} viewBox="0 0 21 21">
              <circle cx="10.500" cy="10.500" r="2.700" />
              <path d="M8.600.9h3.800l.7 3 1.700 1 3-1 1.900 3.300-2.200 2.200v2.200l2.200 2.200-1.900 3.300-3-1-1.700 1-.7 3H8.600l-.7-3-1.700-1-3 1-1.900-3.300 2.200-2.200V9.400L1.300 7.200l1.900-3.300 3 1 1.700-1z" />
            </Icon>
          </SideItem>
        </Sidebar>
      </Workspace>

      <Taskbar>
        <Weather>
          <WeatherIcon>
            <Icon $w={31} $h={34} viewBox="0 0 31 34">
              <defs><linearGradient id="cl" x1="0" x2="0" y2="1"><stop offset="0" stopColor="#dbe7fb" /><stop offset="1" stopColor="#86a8e8" /></linearGradient></defs>
              <path d="M4 13a4 4 0 0 1 0-7.500 5 5 0 0 1 9-1.500 5 5 0 0 1 4 9z" fill="url(#cl)" />
              <path d="M25 13c6 8-2 17-10 16.500-5 0-9-3-11.500-8C15 26 23 21 25 13z" fill="#f5a02a" />
              <path d="M17 28.500a4 4 0 0 1 0-7.500 5 5 0 0 1 9-1.500 4.800 4.800 0 0 1 2 9z" fill="url(#cl)" />
            </Icon>
            <Count $x={15} $y={-6} $bg="#c42b1c">1</Count>
          </WeatherIcon>
          <WeatherText><span>85°F</span><span>Partly cloudy</span></WeatherText>
        </Weather>
        <Icon $w={29} viewBox="0 0 29 29">
          <defs>
            <linearGradient id="wf" gradientUnits="userSpaceOnUse" x1="0" y1="0" x2="29" y2="29"><stop offset="0" stopColor="#4ccafd" /><stop offset="0.600" stopColor="#0a80dc" /><stop offset="1" stopColor="#066acb" /></linearGradient></defs>
          <path d="M1 0h13v14H0V1q0-1 1-1zM15 0h13q1 0 1 1v13H15zM0 15h14v14H1q-1 0-1-1zM15 15h14v13q0 1-1 1H15z" fill="url(#wf)" />
        </Icon>
        <SearchBox>
          <Icon $w={18} $c="#222" $s={2} viewBox="0 0 18 18"><circle cx="7.500" cy="7.500" r="6.500" /><path d="M12.300 12.300l4.700 5" /></Icon>
          <SearchText>Search</SearchText>
          <Curtain />
        </SearchBox>
        {taskApps.map((a, i) => <AppButton key={i} $running={a.running} $current={a.current}>{a.icon}</AppButton>)}
        <Spacer />
        <Slot $w={40}><Icon $w={13} $h={8} $c="#222" $s={1.700} viewBox="0 0 13 8"><path d="M.5 7l6-6 6 6" /></Icon></Slot>
        <Slot $w={40}>
          <Icon $w={20} $h={14} viewBox="0 0 20 14">
            <path d="M5.500 4.500a5 5 0 0 1 9-.3 4.600 4.600 0 0 1 1.500 9H4.800A4.300 4.300 0 0 1 5.500 4.500z" fill="#e6e6e6" />
            <path d="M5.500 4.500a5 5 0 0 1 9-.3l1.500.5-8.500 6-6 1A4.300 4.300 0 0 1 5.500 4.500z" fill="#8f8f8f" />
            <path d="M5.500 4.500a5 5 0 0 1 9-.3 4.600 4.600 0 0 1 1.500 9H4.800A4.300 4.300 0 0 1 5.500 4.500z" stroke="#222" strokeWidth="1.300" />
          </Icon>
        </Slot>
        <Slot $w={40}>
          <Icon $w={20} $h={20} $c="#222" viewBox="0 0 20 20">
            <path d="M.8 10A9 9 0 0 1 18 5.500M18.800.8v5h-5.500M1.500 19.500v-5h5M1.500 14.500Q4.500 19 9 19" />
            <circle cx="15" cy="15" r="5" fill="#ff9a0a" stroke="none" />
          </Icon>
        </Slot>
        <Stack $w={56} $align="center"><StackLine>ENG</StackLine><StackLine>IN</StackLine></Stack>
        <Slot $w={38}>
          <Icon $w={20} $h={15} $c="#222" $s={1.400} viewBox="0 0 20 15">
            <path d="M.7 5.500Q10-3.800 19.300 5.500M3.500 8.500Q10 2 16.500 8.500M6.200 11.200q3.800-3.800 7.600 0" /><circle cx="10" cy="13.300" r="1.500" fill="#222" stroke="none" />
          </Icon>
        </Slot>
        <Slot $w={22}>
          <Icon $w={20} $h={16} $c="#222" $s={1.300} viewBox="0 0 20 16">
            <path d="M.7 5.500h3L8.500 1v14L3.700 10.500h-3zM11.500 5.500q1.500 2.500 0 5M14 3.300q3 4.700 0 9.400M16.700 1q4.500 7 0 14" />
          </Icon>
        </Slot>
        <Slot $w={38}>
          <Icon $w={20} $h={13} viewBox="0 0 20 13">
            <rect x="0.700" y="0.700" width="16.600" height="11.600" rx="2.800" stroke="#222" strokeWidth="1.300" /><rect x="2.500" y="2.500" width="13" height="8" rx="1" fill="#111" /><path d="M18.800 5v3" stroke="#222" strokeWidth="2" />
          </Icon>
        </Slot>
        <Stack $w={89} $align="right"><StackLine $ls={0.100}>21:16</StackLine><StackLine $ls={0.400}>27-03-2024</StackLine></Stack>
        <Slot $w={40}>
          <Icon $w={16} $h={19} viewBox="0 0 16 19">
            <path d="M8 .3a6.500 6.500 0 0 1 6.500 6.500v5.200l1.500 2.800H0L1.500 12V6.800A6.500 6.500 0 0 1 8 .3zM5 16h6a3 3 0 0 1-6 0z" fill="#03357f" />
          </Icon>
        </Slot>
        <Slot $w={14} />
      </Taskbar>
    </Screen>
  );
}
